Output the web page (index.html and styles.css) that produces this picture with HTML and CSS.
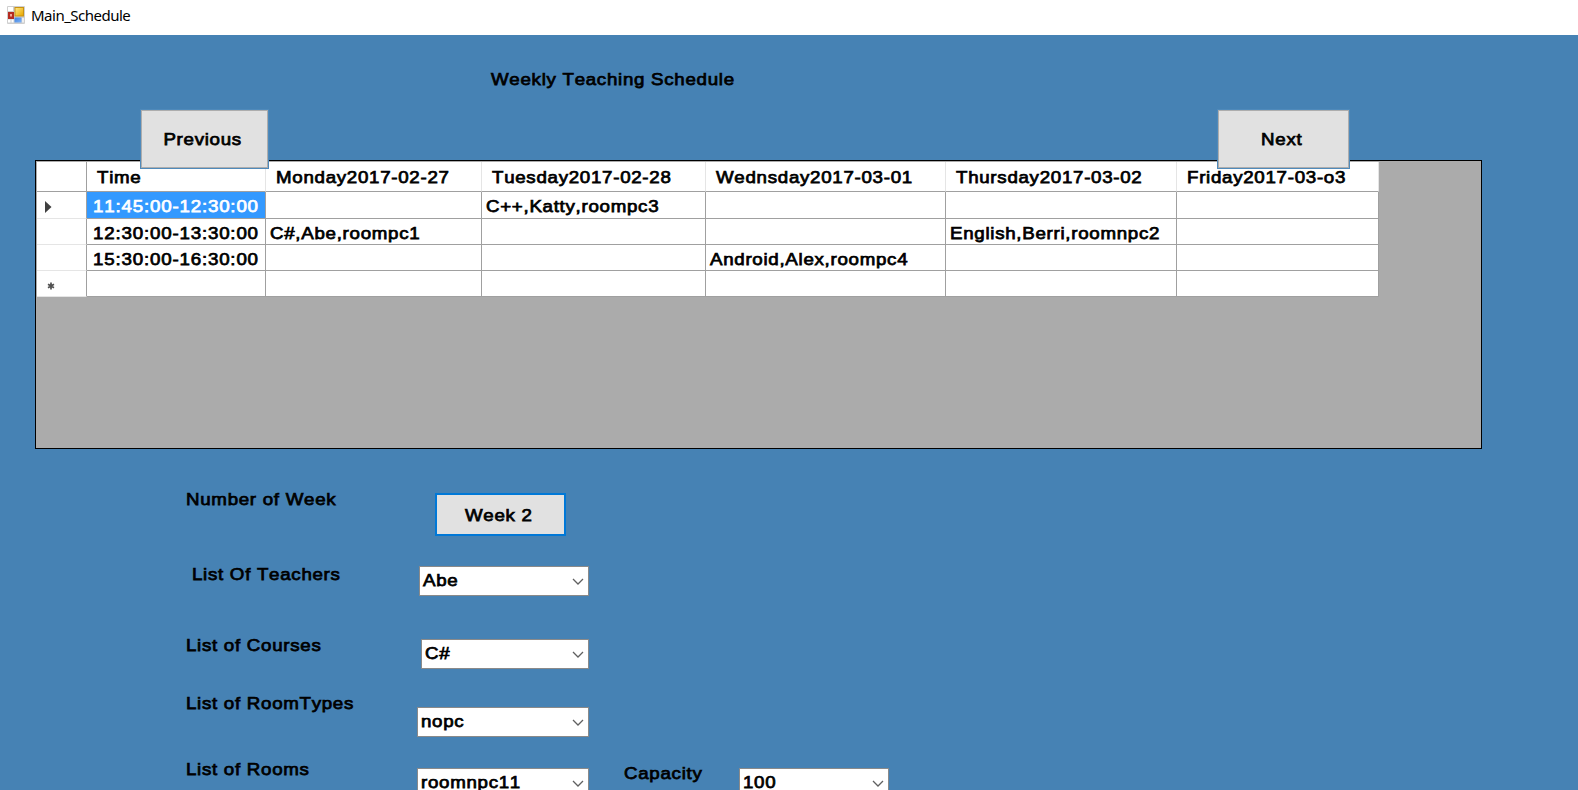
FILE: index.html
```html
<!DOCTYPE html>
<html lang="en">
<head>
<meta charset="utf-8">
<title>Main_Schedule</title>
<link rel="stylesheet" href="styles.css">
</head>
<body>
<header class="titlebar">
  <svg class="app-icon" width="18" height="18" viewBox="0 0 18 18">
    <defs>
      <linearGradient id="gold" x1="0" y1="0" x2="1" y2="1"><stop offset="0" stop-color="#ffe680"/><stop offset="1" stop-color="#e8a800"/></linearGradient>
      <linearGradient id="sky" x1="0" y1="0" x2="1" y2="1"><stop offset="0" stop-color="#3f7fdc"/><stop offset="1" stop-color="#7db4fa"/></linearGradient>
    </defs>
    <rect width="18" height="18" rx="1" fill="#cfcfcf"/>
    <path d="M1 1h5v4H1zM1 13.500h2.500v3H1zM4.500 13.500h2v3h-2z" fill="#fff"/>
    <rect x="1" y="6" width="6" height="7" fill="#b52b20"/>
    <rect x="3" y="8" width="2" height="2.500" fill="#f0a79a"/>
    <rect x="7.500" y="1" width="9.500" height="9.500" fill="#c99212"/>
    <rect x="8.500" y="2" width="7.500" height="7.500" fill="url(#gold)"/>
    <rect x="7.500" y="11.500" width="7" height="5" fill="url(#sky)"/>
    <path d="M15 12h2v4.500h-2z" fill="#eee"/>
  </svg>
  <span class="caption">Main_Schedule</span>
</header>
<main class="form">
  <h1 class="heading"><span class="t">Weekly Teaching Schedule</span></h1>
  <button class="btn previous"><span class="t">Previous</span></button>
  <button class="btn next"><span class="t">Next</span></button>
  <section class="grid-panel">
    <div class="grid">
      <div class="head corner"></div>
      <div class="head"><span class="t">Time</span></div>
      <div class="head"><span class="t">Monday2017-02-27</span></div>
      <div class="head"><span class="t">Tuesday2017-02-28</span></div>
      <div class="head"><span class="t">Wednsday2017-03-01</span></div>
      <div class="head"><span class="t">Thursday2017-03-02</span></div>
      <div class="head"><span class="t">Friday2017-03-o3</span></div>

      <div class="row-head"><svg class="arrow" width="7" height="12" viewBox="0 0 7 12"><path d="M0 0l6.500 6L0 12z" fill="#404040"/></svg></div>
      <div class="cell time selected"><span class="t">11:45:00-12:30:00</span></div>
      <div class="cell"></div>
      <div class="cell"><span class="t">C++,Katty,roompc3</span></div>
      <div class="cell"></div>
      <div class="cell"></div>
      <div class="cell"></div>

      <div class="row-head"></div>
      <div class="cell time"><span class="t">12:30:00-13:30:00</span></div>
      <div class="cell"><span class="t">C#,Abe,roompc1</span></div>
      <div class="cell"></div>
      <div class="cell"></div>
      <div class="cell"><span class="t">English,Berri,roomnpc2</span></div>
      <div class="cell"></div>

      <div class="row-head"></div>
      <div class="cell time"><span class="t">15:30:00-16:30:00</span></div>
      <div class="cell"></div>
      <div class="cell"></div>
      <div class="cell"><span class="t">Android,Alex,roompc4</span></div>
      <div class="cell"></div>
      <div class="cell"></div>

      <div class="row-head"><svg class="star" width="8" height="8" viewBox="0 0 8 8"><path d="M4 .5v7M1 2.250l6 3.500M7 2.250l-6 3.500" stroke="#505050" stroke-width="1.700" fill="none"/></svg></div>
      <div class="cell"></div>
      <div class="cell"></div>
      <div class="cell"></div>
      <div class="cell"></div>
      <div class="cell"></div>
      <div class="cell"></div>
    </div>
  </section>
  <section class="fields">
    <div class="field week">
      <label class="label"><span class="t">Number of Week</span></label>
      <button class="btn week-btn"><span class="t">Week 2</span></button>
    </div>
    <div class="field teachers">
      <label class="label"><span class="t">List Of Teachers</span></label>
      <div class="combo"><span class="t">Abe</span><svg class="chevron" width="12" height="7" viewBox="0 0 12 7"><path d="M1 1l5 5 5-5"/></svg></div>
    </div>
    <div class="field courses">
      <label class="label"><span class="t">List of Courses</span></label>
      <div class="combo"><span class="t">C#</span><svg class="chevron" width="12" height="7" viewBox="0 0 12 7"><path d="M1 1l5 5 5-5"/></svg></div>
    </div>
    <div class="field types">
      <label class="label"><span class="t">List of RoomTypes</span></label>
      <div class="combo"><span class="t">nopc</span><svg class="chevron" width="12" height="7" viewBox="0 0 12 7"><path d="M1 1l5 5 5-5"/></svg></div>
    </div>
    <div class="field rooms">
      <label class="label"><span class="t">List of Rooms</span></label>
      <div class="combo"><span class="t">roomnpc11</span><svg class="chevron" width="12" height="7" viewBox="0 0 12 7"><path d="M1 1l5 5 5-5"/></svg></div>
      <label class="label capacity"><span class="t">Capacity</span></label>
      <div class="combo capacity-combo"><span class="t">100</span><svg class="chevron" width="12" height="7" viewBox="0 0 12 7"><path d="M1 1l5 5 5-5"/></svg></div>
    </div>
  </section>
</main>
</body>
</html>
```
FILE: styles.css
```css
* { box-sizing: border-box; }

body {
  margin: 0;
  height: 790px;
  overflow: hidden;
  display: flex;
  flex-direction: column;
  background: #4682b4;
  color: #000;
  font: 17px/20px "Liberation Sans", Arial, sans-serif;
  font-kerning: none;
}

.titlebar {
  flex: none;
  height: 35px;
  display: flex;
  align-items: flex-start;
  gap: 6px;
  padding: 6px 0 0 7px;
  background: #fff;
}

.caption {
  margin-top: -1px;
  font: 15px/20px "Noto Sans", "Open Sans", sans-serif;
  letter-spacing: -0.5px;
}

/* Wide, heavy lettering of the form's controls */
.t {
  display: inline-block;
  white-space: nowrap;
  letter-spacing: 0.65px;
  -webkit-text-stroke: 0.75px currentColor;
  transform: scaleX(1.1);
  transform-origin: left center;
}

.form {
  position: relative;
  flex: 1;
  min-height: 0;
  overflow: hidden;
}

.heading {
  margin: 35px 0 70px 491px;
  height: 20px;
  font-size: 17px;
  font-weight: 400;
}

.btn {
  display: flex;
  align-items: center;
  justify-content: center;
  padding: 0;
  border: 1px solid #adadad;
  background: #e1e1e1;
  color: #000;
  font: inherit;
  font-kerning: none;
}

.btn .t { transform-origin: center; }

/* Navigation buttons overlap the top edge of the grid */
.previous,
.next {
  position: absolute;
  z-index: 1;
  top: 75px;
  height: 58px;
  padding: 2px 3px 0 0;
  box-shadow: 0 0 0 1px #4f8abb;
}

.previous { left: 141px; width: 127px; }
.next { left: 1218px; width: 131px; }

.grid-panel {
  width: 1447px;
  height: 289px;
  margin-left: 35px;
  padding: 1px;
  border: 1px solid #000;
  background: #ababab;
}

.grid {
  display: grid;
  width: 1342px;
  grid-template-columns: 50px 179px 216px 224px 240px 231px 202px;
  grid-template-rows: 30px 27px 26px 26px 26px;
  background: #fff;
}

.head {
  display: flex;
  align-items: center;
  padding: 3px 0 0 10px;
  border-right: 1px solid #e5e5e5;
  border-bottom: 1px solid #a0a0a0;
}

.corner { border-right-color: #a0a0a0; }

.row-head {
  display: flex;
  align-items: center;
  padding: 3px 0 0 8px;
  border-right: 1px solid #a0a0a0;
  border-bottom: 1px solid #e5e5e5;
}

.star { margin: 2px 0 0 2px; }

.cell {
  display: flex;
  align-items: center;
  padding: 4px 0 0 4px;
  border-right: 1px solid #a0a0a0;
  border-bottom: 1px solid #a0a0a0;
}

.time { padding-left: 6px; }
.time .t { letter-spacing: 0.75px; }

.selected { background: #3399ff; color: #fff; }

.fields { margin: 41px 0 0 186px; }

.field { display: flex; align-items: flex-start; }

.label { flex: none; width: 231px; height: 20px; }

.week { height: 75px; }
.week-btn {
  width: 131px;
  height: 43px;
  margin: 3px 0 0 18px;
  border: 2px solid #0078d7;
  padding: 2px 4px 0 0;
}

.combo {
  flex: none;
  display: flex;
  align-items: center;
  justify-content: space-between;
  width: 172px;
  height: 30px;
  padding: 0 4px 0 3px;
  border: 1px solid #8a8a8a;
  background: #fff;
}

.chevron { fill: none; stroke: #606060; stroke-width: 1.3; }

.teachers { height: 71px; }
.teachers .label { padding-left: 6px; }
.teachers .combo { width: 170px; margin: 1px 0 0 2px; }

.courses { height: 58px; }
.courses .combo { width: 168px; margin: 3px 0 0 4px; }

.types { height: 66px; }
.types .combo { margin-top: 13px; }

.rooms .combo { margin-top: 8px; }
.rooms .capacity { width: 115px; margin: 4px 0 0 35px; }
.rooms .capacity-combo { width: 150px; }
```
